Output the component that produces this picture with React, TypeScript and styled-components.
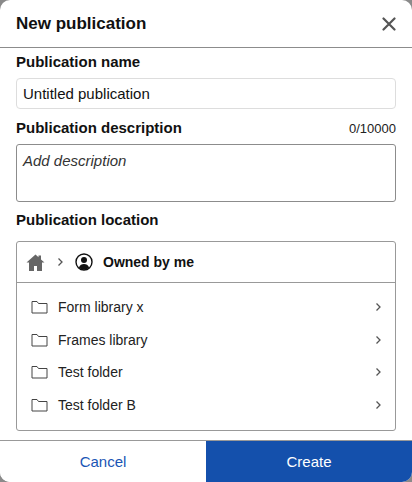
import React from 'react';
import styled, { createGlobalStyle } from 'styled-components';

const Global = createGlobalStyle`
  html, body { margin: 0; padding: 0; background: #8a8a8a; }
  body { font-family: "Liberation Sans", Arial, sans-serif; color: #111; }
`;

const Dialog = styled.div`
  width: 412px;
  height: 482px;
  background: #fff;
  border-radius: 10px;
  overflow: hidden;
  display: flex;
  flex-direction: column;
  box-sizing: border-box;
`;

const Header = styled.header`
  height: 47px;
  flex: none;
  display: flex;
  align-items: center;
  justify-content: space-between;
  padding: 0 16px;
  border-bottom: 1px solid #8c8c8c;
  h1 { margin: 0; font-size: 17px; font-weight: 700; }
`;

const CloseButton = styled.button`
  border: none;
  background: none;
  padding: 0;
  display: flex;
  color: #555;
`;

const Body = styled.div`
  flex: 1;
  padding: 5px 16px 0;
  display: flex;
  flex-direction: column;
`;

const LabelRow = styled.div<{ $top?: number }>`
  display: flex;
  justify-content: space-between;
  align-items: baseline;
  margin-top: ${p => p.$top ?? 0}px;
  margin-bottom: 8px;
  font-size: 15px;
  font-weight: 700;
  span { font-weight: 400; font-size: 13px; color: #222; }
`;

const Input = styled.div`
  height: 29px;
  border: 1px solid #ddd;
  border-radius: 4px;
  padding: 0 6px;
  display: flex;
  align-items: center;
  font-size: 15px;
`;

const TextArea = styled.div`
  height: 58px;
  border: 1px solid #8c8c8c;
  border-radius: 3px;
  padding: 7px 6px;
  box-sizing: border-box;
  font-size: 15px;
  font-style: italic;
  color: #333;
`;

const Panel = styled.div`
  border: 1px solid #999;
  border-radius: 3px;
  margin-top: 5px;
  padding-bottom: 9px;
`;

const Crumbs = styled.div`
  height: 40px;
  display: flex;
  align-items: center;
  gap: 10px;
  padding: 0 9px;
  border-bottom: 1px solid #999;
  font-size: 14px;
  font-weight: 700;
`;

const Item = styled.div`
  height: 32.5px;
  display: flex;
  align-items: center;
  padding: 0 12px 0 14px;
  font-size: 14px;
  color: #222;
  &:nth-child(2) { margin-top: 8px; }
  svg.folder { margin-right: 10px; }
  .name { flex: 1; }
`;

const Footer = styled.footer`
  height: 41px;
  flex: none;
  display: flex;
  border-top: 1px solid #999;
`;

const FooterButton = styled.button<{ $primary?: boolean }>`
  flex: 1;
  border: none;
  font-family: inherit;
  font-size: 15px;
  background: ${p => (p.$primary ? '#1450ac' : '#fff')};
  color: ${p => (p.$primary ? '#fff' : '#1a55b5')};
`;

const Chevron = () => (
  <svg width="10" height="10" viewBox="0 0 10 10" fill="none" stroke="#555" strokeWidth="1.3">
    <path d="M3.5 1.5 7 5l-3.5 3.5" />
  </svg>
);

const Folder = () => (
  <svg className="folder" width="17" height="14" viewBox="0 0 17 14" fill="none" stroke="#444" strokeWidth="1">
    <path d="M1 1.5h5l1.5 2H16v9.5H1z" />
  </svg>
);

const folders = ['Form library x', 'Frames library', 'Test folder', 'Test folder B'];

export default function App() {
  return (
    <>
      <Global />
      <Dialog>
        <Header>
          <h1>New publication</h1>
          <CloseButton aria-label="Close">
            <svg width="14" height="14" viewBox="0 0 14 14" stroke="#555" strokeWidth="2.2" strokeLinecap="round">
              <path d="M1.5 1.5l11 11M12.5 1.5l-11 11" />
            </svg>
          </CloseButton>
        </Header>
        <Body>
          <LabelRow>Publication name</LabelRow>
          <Input>Untitled publication</Input>
          <LabelRow $top={10}>
            Publication description<span>0/10000</span>
          </LabelRow>
          <TextArea>Add description</TextArea>
          <LabelRow $top={9}>Publication location</LabelRow>
          <Panel>
            <Crumbs>
              <svg width="19" height="17" viewBox="0 0 19 17" fill="#666">
                <path d="M9.5 0.5 0.5 8.5h2.5V17h5v-5h3v5h5V8.5h2.5L15 5.4V1.5h-2.5v1.7z" />
              </svg>
              <Chevron />
              <svg width="18" height="18" viewBox="0 0 18 18">
                <circle cx="9" cy="9" r="8" fill="none" stroke="#111" strokeWidth="1.4" />
                <circle cx="9" cy="7" r="3" fill="#111" />
                <path d="M3.8 14.5c1-2.5 3-3.6 5.2-3.6s4.2 1.1 5.2 3.6A7 7 0 0 1 3.8 14.5z" fill="#111" />
              </svg>
              <span>Owned by me</span>
            </Crumbs>
            {folders.map(f => (
              <Item key={f}>
                <Folder />
                <span className="name">{f}</span>
                <Chevron />
              </Item>
            ))}
          </Panel>
        </Body>
        <Footer>
          <FooterButton>Cancel</FooterButton>
          <FooterButton $primary>Create</FooterButton>
        </Footer>
      </Dialog>
    </>
  );
}
